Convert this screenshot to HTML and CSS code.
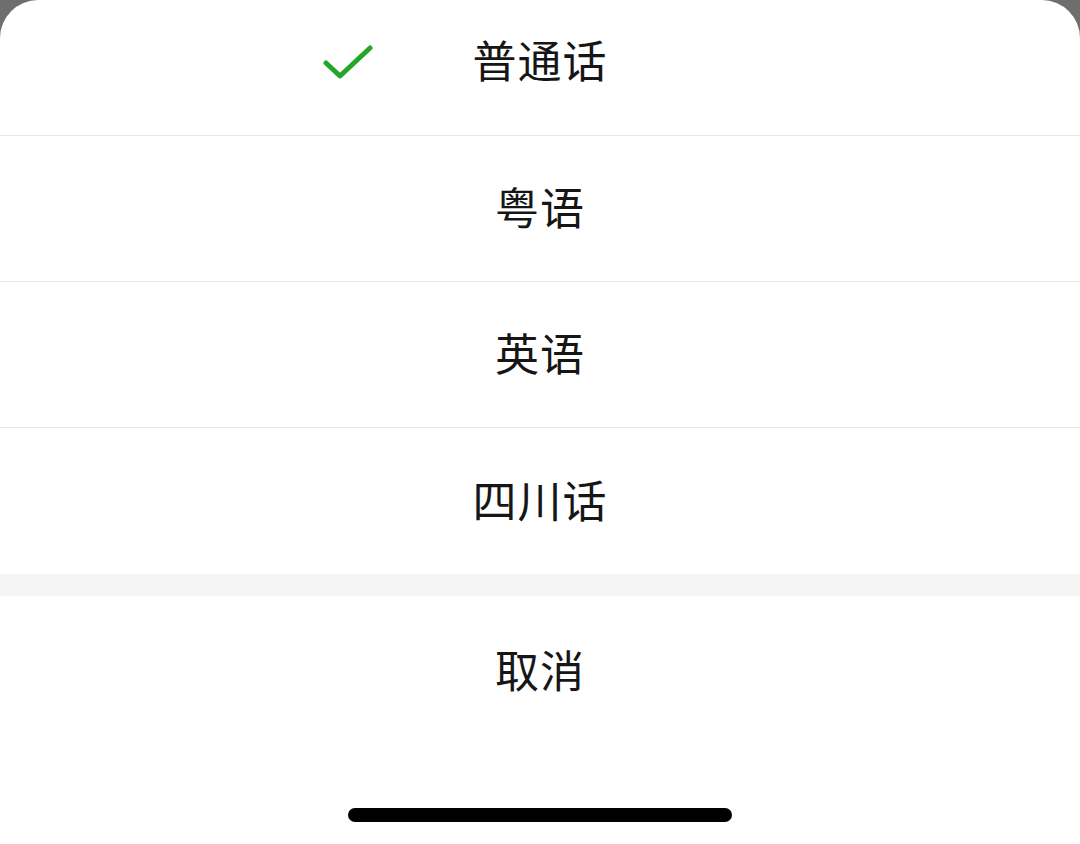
FILE: index.html
```html
<!DOCTYPE html>
<html lang="zh-CN">
<head>
  <meta charset="UTF-8" />
  <meta name="viewport" content="width=device-width, initial-scale=1.0"/>
  <title>选择语言</title>
  <link rel="stylesheet" href="styles.css">
</head>
<body>

  <div class="sheet">
    <div class="option first selected">
      <span class="check">
        <svg width="50" height="36" viewBox="0 0 50 36">
          <path d="M3 19 L17 32 L47 4" fill="none" stroke="#26a626" stroke-width="5" stroke-linecap="round" stroke-linejoin="round"/>
        </svg>
      </span>
      <span class="label">普通话</span>
    </div>
    <div class="option"><span class="label">粤语</span></div>
    <div class="option"><span class="label">英语</span></div>
    <div class="option last"><span class="label">四川话</span></div>

    <div class="gap"></div>

    <div class="option cancel"><span class="label">取消</span></div>

    <div class="home-area">
      <div class="home-bar"></div>
    </div>
  </div>

</body>
</html>
```

FILE: styles.css
```css
body {
  margin: 0;
  background: #6e6e6e;
  font-family: "Noto Sans CJK SC", "Noto Sans", sans-serif;
  color: #161616;
}

.sheet {
  background: white;
  border-radius: 38px 38px 0 0;
  height: 844px;
  overflow: hidden;
}

.option {
  display: grid;
  grid-template-columns: 1fr auto 1fr;
  align-items: center;
  height: 146px;
  box-sizing: border-box;
  padding-bottom: 5px;
  border-bottom: 1px solid #e8e8e8;
}

.option.first {
  height: 136px;
  padding-bottom: 18px;
}

.option.last {
  border-bottom: none;
}

.label {
  grid-column: 2;
  font-size: 44px;
  line-height: 1;
  letter-spacing: 1px;
}

.check {
  grid-column: 1;
  justify-self: end;
  margin-right: 100px;
  margin-top: 6px;
  display: flex;
}

.gap {
  height: 22px;
  background: #f5f5f5;
}

.option.cancel {
  border-bottom: none;
  height: 148px;
  padding-bottom: 3px;
}

.home-area {
  display: flex;
  justify-content: center;
  padding-top: 64px;
}

.home-bar {
  width: 384px;
  height: 14px;
  background: #000;
  border-radius: 7px;
}
```
